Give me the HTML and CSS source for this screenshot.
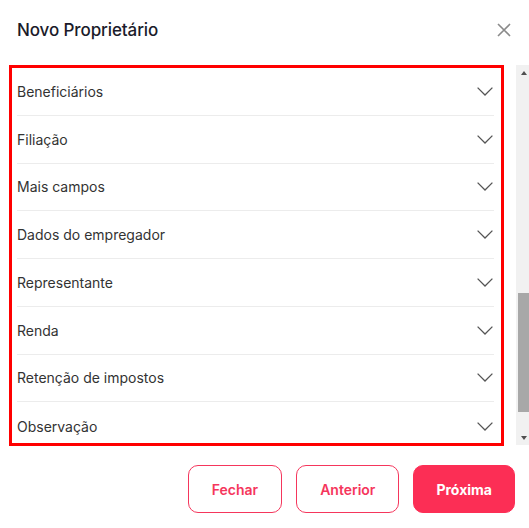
FILE: index.html
```html
<!DOCTYPE html>
<html lang="pt-BR">
<head>
<meta charset="utf-8">
<title>Novo Proprietário</title>
<link rel="stylesheet" href="styles.css">
</head>
<body>
<div class="modal">
  <header class="modal-header">
    <h1 class="modal-title">Novo Proprietário</h1>
    <button class="close-btn" aria-label="Fechar">
      <svg width="14" height="14" viewBox="0 0 14 14"><path d="M1 1L13 13M13 1L1 13" stroke="#8a8a8a" stroke-width="1.6" fill="none"/></svg>
    </button>
  </header>
  <div class="body-row">
    <div class="list-box">
      <ul class="acc-list">
        <li class="acc-item"><span>Beneficiários</span><svg class="chev" width="16" height="9" viewBox="0 0 16 9"><path d="M0.6 0.6L8 8L15.4 0.6"/></svg></li>
        <li class="acc-item"><span>Filiação</span><svg class="chev" width="16" height="9" viewBox="0 0 16 9"><path d="M0.6 0.6L8 8L15.4 0.6"/></svg></li>
        <li class="acc-item"><span>Mais campos</span><svg class="chev" width="16" height="9" viewBox="0 0 16 9"><path d="M0.6 0.6L8 8L15.4 0.6"/></svg></li>
        <li class="acc-item"><span>Dados do empregador</span><svg class="chev" width="16" height="9" viewBox="0 0 16 9"><path d="M0.6 0.6L8 8L15.4 0.6"/></svg></li>
        <li class="acc-item"><span>Representante</span><svg class="chev" width="16" height="9" viewBox="0 0 16 9"><path d="M0.6 0.6L8 8L15.4 0.6"/></svg></li>
        <li class="acc-item"><span>Renda</span><svg class="chev" width="16" height="9" viewBox="0 0 16 9"><path d="M0.6 0.6L8 8L15.4 0.6"/></svg></li>
        <li class="acc-item"><span>Retenção de impostos</span><svg class="chev" width="16" height="9" viewBox="0 0 16 9"><path d="M0.6 0.6L8 8L15.4 0.6"/></svg></li>
        <li class="acc-item"><span>Observação</span><svg class="chev" width="16" height="9" viewBox="0 0 16 9"><path d="M0.6 0.6L8 8L15.4 0.6"/></svg></li>
      </ul>
    </div>
    <div class="scrollbar">
      <div class="sb-btn"><span class="tri-up"></span></div>
      <div class="sb-thumb"></div>
      <div class="sb-btn sb-down"><span class="tri-down"></span></div>
    </div>
  </div>
  <footer class="modal-footer">
    <button class="btn btn-outline">Fechar</button>
    <button class="btn btn-outline">Anterior</button>
    <button class="btn btn-primary">Próxima</button>
  </footer>
</div>
</body>
</html>
```
FILE: styles.css
```css
* { box-sizing: border-box; }
html, body { margin: 0; padding: 0; background: #fff; }
body { font-family: Inter, "Noto Sans", sans-serif; color: #333; }

.modal { width: 529px; height: 528px; }

.modal-header {
  height: 65px;
  display: flex;
  align-items: center;
  justify-content: space-between;
  padding: 0 18px 6px 17px;
}
.modal-title {
  margin: 0;
  font-size: 17px;
  font-weight: 500;
  color: #1b1b2a;
  letter-spacing: -0.1px;
}
.close-btn {
  border: 0; background: none; padding: 0; width: 14px; height: 14px;
  display: flex; cursor: pointer;
}

.body-row {
  display: flex;
  align-items: flex-start;
  padding-left: 9px;
  gap: 12px;
}
.list-box {
  width: 495px;
  height: 381px;
  border: 3px solid #ff0000;
  overflow: hidden;
}
.acc-list {
  list-style: none;
  margin: 0;
  padding: 0 7px 0 5px;
}
.acc-item {
  height: 47.75px;
  display: flex;
  align-items: center;
  justify-content: space-between;
  border-bottom: 1px solid #ececec;
  font-size: 14px;
  color: #333;
  padding-right: 1px;
}
.acc-item:last-child { border-bottom: 0; }
.chev { fill: none; stroke: #555; stroke-width: 1.3; }

.scrollbar {
  width: 13px;
  height: 380px;
  background: #f1f1f1;
  display: flex;
  flex-direction: column;
}
.sb-btn {
  height: 15px;
  display: flex;
  align-items: center;
  justify-content: center;
  padding-left: 2px;
}
.sb-down { margin-top: auto; }
.tri-up, .tri-down {
  width: 0; height: 0;
  border-left: 3.5px solid transparent;
  border-right: 3.5px solid transparent;
}
.tri-up { border-bottom: 4px solid #505050; }
.tri-down { border-top: 4px solid #505050; }
.sb-thumb {
  margin-top: 213px;
  margin-left: 2px;
  width: 11px;
  height: 119px;
  background: #a8a8a8;
}

.modal-footer {
  display: flex;
  justify-content: flex-end;
  gap: 14px;
  padding: 19px 14px 0 0;
}
.btn {
  height: 48px;
  padding: 0 22px;
  border-radius: 10px;
  font-family: Inter, "Noto Sans", sans-serif;
  font-size: 14px;
  font-weight: 600;
  cursor: pointer;
}
.btn-outline {
  background: #fff;
  border: 1px solid #f5365c;
  color: #f5365c;
  padding: 0 23px;
}
.btn-primary {
  background: #fc2e55;
  border: 1px solid #fc2e55;
  color: #fff;
  font-weight: 700;
}
```
